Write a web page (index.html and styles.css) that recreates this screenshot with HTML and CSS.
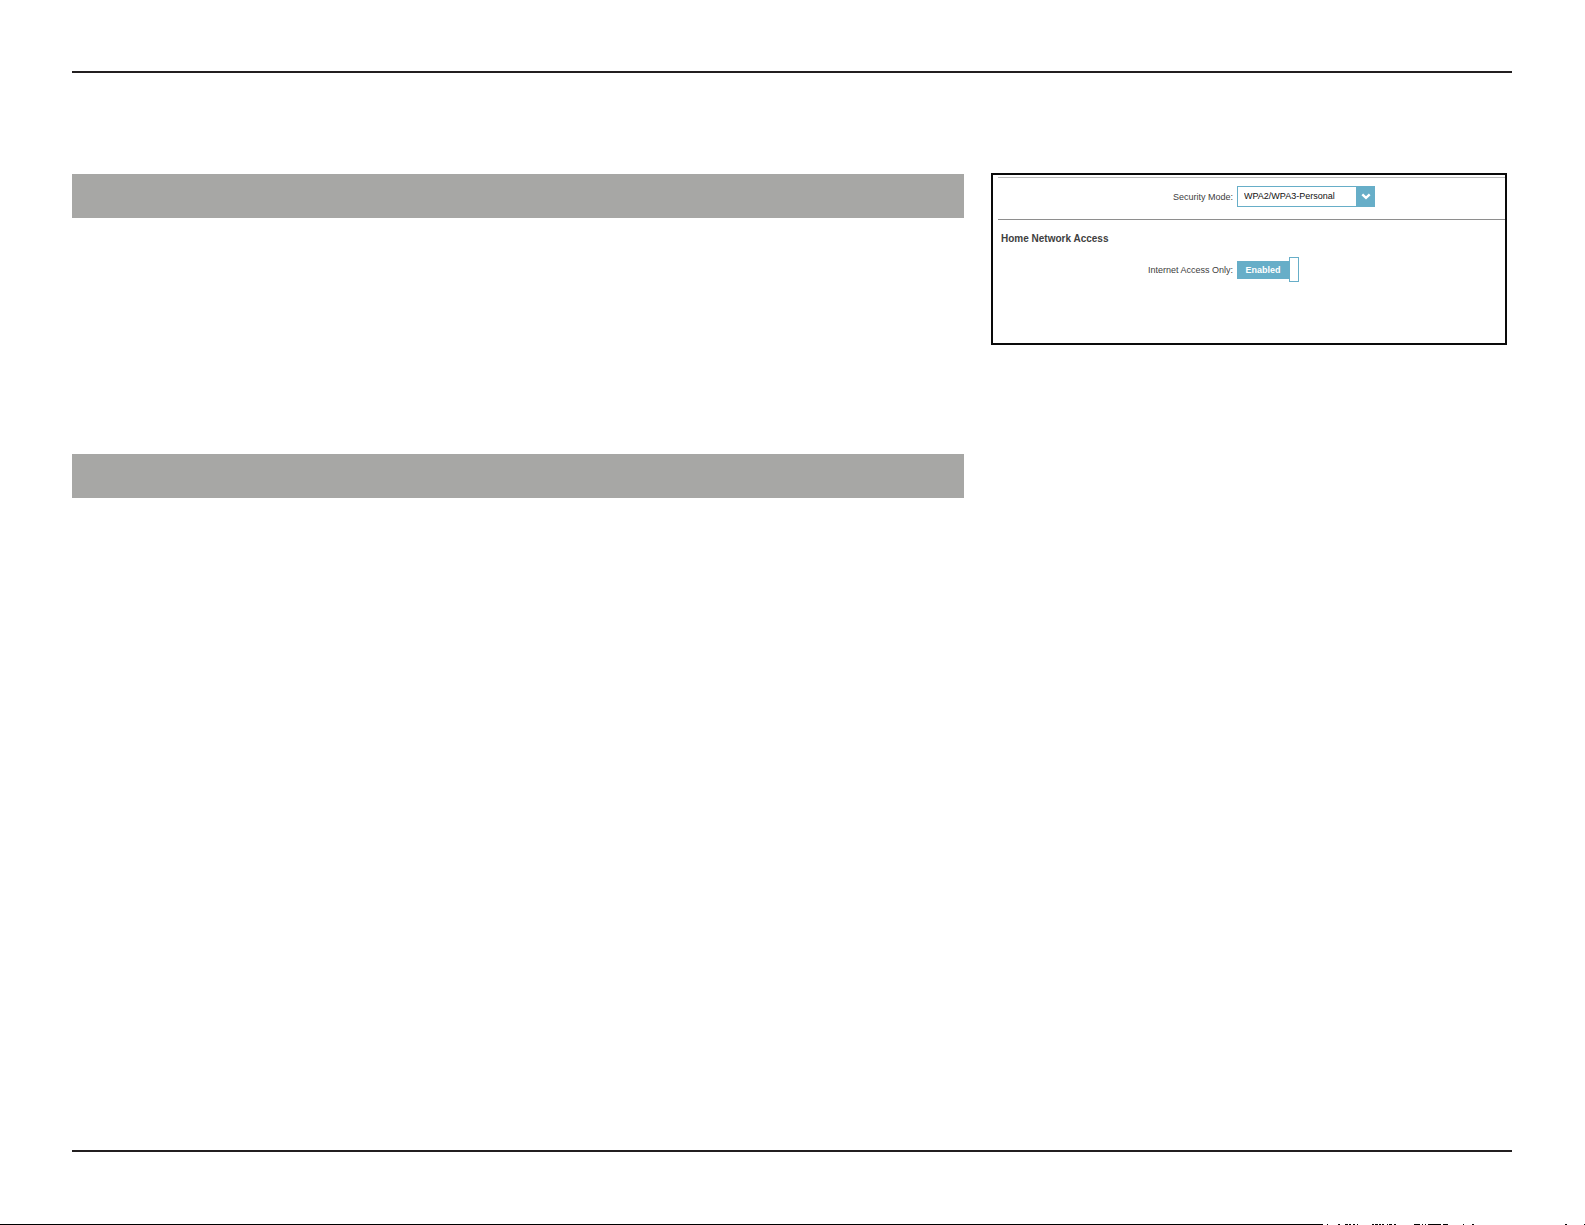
FILE: index.html
```html
<!DOCTYPE html>
<html lang="en">
<head>
<meta charset="utf-8">
<meta name="viewport" content="width=device-width, initial-scale=1">
<title>Home Network Access</title>
<link rel="stylesheet" href="styles.css">
</head>
<body>
<div class="page">
  <main class="content">
    <div class="sections">
      <div class="section-bar"></div>
      <div class="section-bar"></div>
    </div>
    <form class="panel">
      <div class="row row-security">
        <label class="row-label" for="security-mode">Security Mode:</label>
        <div class="select">
          <select class="select-input" id="security-mode">
            <option>WPA2/WPA3-Personal</option>
          </select>
          <span class="select-arrow">
            <svg width="10" height="7" viewBox="0 0 10 7" aria-hidden="true"><path d="M1.3 1.3 5 4.8 8.7 1.3" fill="none" stroke="#fff" stroke-width="2.4"/></svg>
          </span>
        </div>
      </div>
      <h2 class="panel-title">Home Network Access</h2>
      <div class="row">
        <label class="row-label" for="internet-only">Internet Access Only:</label>
        <div class="toggle">
          <input class="toggle-input" type="checkbox" id="internet-only" checked>
          <span class="toggle-text">Enabled</span>
          <span class="toggle-handle"></span>
        </div>
      </div>
    </form>
  </main>
</div>
<footer class="edge">
  <div class="edge-line"></div>
  <svg class="edge-marks" viewBox="0 0 262 1" preserveAspectRatio="none" aria-hidden="true">
    <path d="M4 0h1v1h-1zM15 0h2v1h-2zM22 0h3v1h-3zM26 0h2v1h-2zM30 0h2v1h-2zM34 0h1v1h-1zM49 0h2v1h-2zM52 0h3v1h-3zM56 0h2v1h-2zM59 0h2v1h-2zM64 0h1v1h-1zM66 0h3v1h-3zM71 0h2v1h-2zM91 0h6v1h-6zM99 0h1v1h-1zM102 0h1v1h-1zM105 0h13v1h-13zM120 0h5v1h-5zM140 0h1v1h-1zM149 0h2v1h-2zM242 0h2v1h-2zM261 0h1v1h-1z"/>
  </svg>
</footer>
</body>
</html>
```
FILE: styles.css
```css
* {
  box-sizing: border-box;
}

body {
  margin: 0;
  min-height: 100vh;
  display: flex;
  flex-direction: column;
  background: #fff;
  color: #404040;
  font-family: "Liberation Sans", Arial, sans-serif;
  font-size: 9px;
  line-height: 12px;
}

.page {
  flex: 1;
  margin: 71px 73px 72px 72px;
  border-top: 2px solid #231f20;
  border-bottom: 2px solid #231f20;
}

.content {
  display: grid;
  grid-template-columns: 892fr 516fr;
  align-items: start;
  gap: 27px;
  padding: 100px 5px 0 0;
}

.sections {
  display: grid;
  gap: 236px;
  padding-top: 1px;
}

.section-bar {
  height: 44px;
  background: #a7a7a5;
}

.panel {
  padding: 2px 0 61px 5px;
  border: 2px solid #0a0a0a;
}

.row {
  display: grid;
  grid-template-columns: 235px 1fr;
  align-items: center;
  gap: 4px;
}

.row-security {
  padding: 8px 0 12px;
  border-top: 1px solid #bcbcbc;
  border-bottom: 1px solid #8e8e8e;
}

.row-label {
  text-align: right;
}

.select {
  display: grid;
  grid-template-columns: 119px 19px;
  width: 138px;
  height: 21px;
}

.select-input {
  grid-area: 1 / 1 / 2 / 3;
  margin: 0;
  padding: 0 19px 2px 6px;
  appearance: none;
  border: 1px solid #67aec8;
  border-radius: 0;
  background: #fff;
  color: #111;
  font: inherit;
}

.select-arrow {
  grid-area: 1 / 2;
  display: grid;
  place-items: center;
  background: #67aec8;
  pointer-events: none;
}

.panel-title {
  margin: 11px 0 10px 3px;
  color: #404040;
  font-size: 10px;
  line-height: 16px;
}

.toggle {
  display: grid;
  grid-template-columns: 52px 10px;
  align-items: center;
  height: 25px;
}

.toggle-input {
  grid-area: 1 / 1;
  width: 52px;
  height: 18px;
  margin: 0;
  appearance: none;
  background: #67aec8;
}

.toggle-text {
  grid-area: 1 / 1;
  color: #fff;
  font-weight: bold;
  text-align: center;
  pointer-events: none;
}

.toggle-handle {
  height: 25px;
  border: 1px solid #67aec8;
  background: #fff;
}

.edge {
  display: grid;
  grid-template-columns: 1323fr 262fr;
  height: 1px;
}

.edge-line {
  background: #000;
}

.edge-marks {
  display: block;
  width: 100%;
  height: 1px;
}
```
